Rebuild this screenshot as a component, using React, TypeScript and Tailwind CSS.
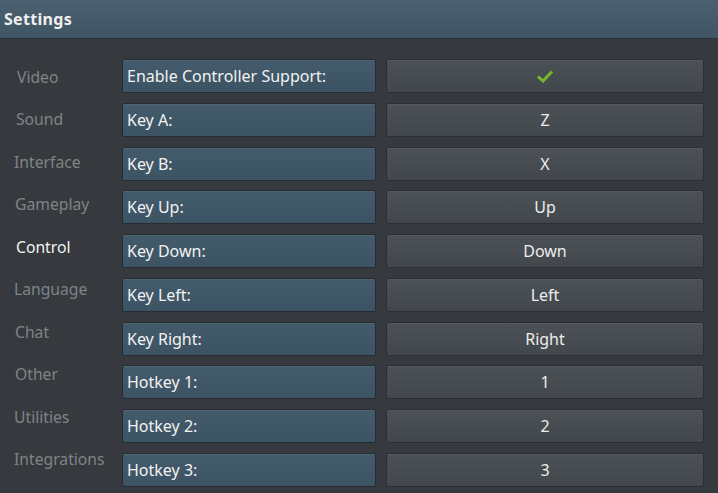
import React from "react";

const nav = ["Video", "Sound", "Interface", "Gameplay", "Control", "Language", "Chat", "Other", "Utilities", "Integrations"];
const navX = ["pl-[17px]", "pl-[16px]", "pl-[14px]", "pl-[15px]", "pl-[16px]", "pl-[14px]", "pl-[15px]", "pl-[15px]", "pl-[14px]", "pl-[14px]"];

const rows: [string, string | null][] = [
  ["Enable Controller Support:", null],
  ["Key A:", "Z"],
  ["Key B:", "X"],
  ["Key Up:", "Up"],
  ["Key Down:", "Down"],
  ["Key Left:", "Left"],
  ["Key Right:", "Right"],
  ["Hotkey 1:", "1"],
  ["Hotkey 2:", "2"],
  ["Hotkey 3:", "3"],
];

export default function App() {
  return (
    <div
      className="w-[718px] h-[493px] overflow-hidden bg-[#363a3e] flex flex-col"
      style={{ fontFamily: '"Noto Sans", "Open Sans", sans-serif' }}
    >
      <div className="h-[39px] shrink-0 bg-gradient-to-b from-[#4b6170] to-[#405563] border-b border-[#27343d] flex items-center pl-[4px]">
        <span className="text-[16px] font-bold text-[#f0f0f0] tracking-[0.3px]">Settings</span>
      </div>
      <div className="flex flex-1">
        <div className="w-[122px] shrink-0 pt-[17px] flex flex-col">
          {nav.map((n, i) => (
            <div
              key={n}
              className={`h-[42.56px] flex items-center ${navX[i]} text-[15.7px] ${n === "Control" ? "text-[#f2f2f2]" : "text-[#7f8387]"}`}
            >
              {n}
            </div>
          ))}
        </div>
        <div className="flex flex-col gap-[9.78px] pt-[20px]">
          {rows.map(([label, val]) => (
            <div key={label} className="flex gap-[10px] h-[34px]">
              <div className="w-[254px] h-full rounded-[2px] border border-[#252d33] bg-gradient-to-b from-[#435b6b] to-[#3c5363] flex items-center pl-[4px] text-[16px] text-[#f2f2f2] shadow-[inset_0_1px_0_rgba(255,255,255,0.06)]">
                {label}
              </div>
              <div className="w-[318px] h-full rounded-[2px] border border-[#2b2f33] bg-gradient-to-b from-[#4c5157] to-[#42474c] flex items-center justify-center text-[16px] text-[#ededed] shadow-[inset_0_1px_0_rgba(255,255,255,0.05)]">
                {val === null ? (
                  <svg width="18" height="14" viewBox="0 0 18 14">
                    <path d="M2 7.5 L7 12 L16 2.5" fill="none" stroke="#76b82a" strokeWidth="3" strokeLinejoin="miter" />
                  </svg>
                ) : (
                  val
                )}
              </div>
            </div>
          ))}
        </div>
      </div>
    </div>
  );
}
